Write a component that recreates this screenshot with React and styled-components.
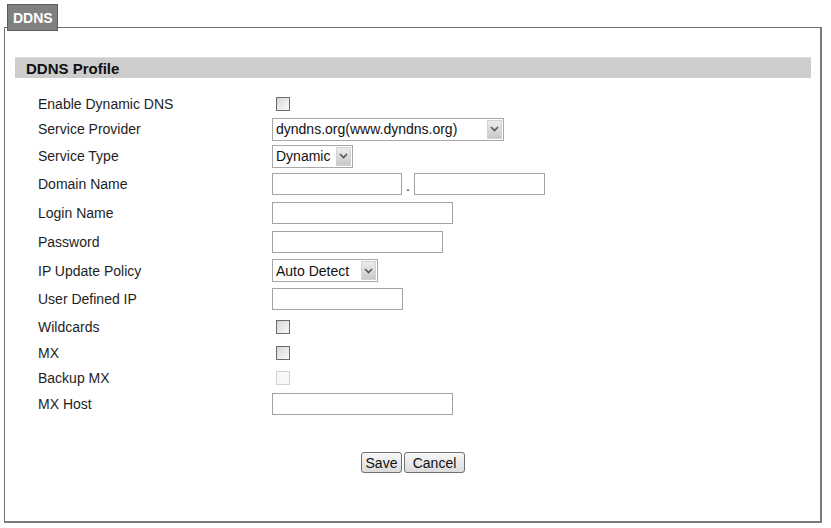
import React from 'react'
import styled, { createGlobalStyle } from 'styled-components'

// ------------------------------------------Styled---------------------------------------------

const GlobalStyle = createGlobalStyle`
    html, body {
        margin:0;
        padding:0;
        background:#fff;
    }
    body {
        font-family:"Liberation Sans", Arial, sans-serif;
        color:#1e1e1e;
    }
`
const Page = styled.div`
    width:818px;
    padding:4px 0 0 4px;
`
const Tab = styled.div`
    position:relative;
    z-index:1;
    box-sizing:border-box;
    width:51px;
    height:27px;
    margin-left:3px;
    margin-bottom:-4px;
    padding-left:5px;
    display:flex;
    align-items:center;
    background:#808080;
    border:1px solid #5c5c5c;
    color:#fff;
    font-weight:bold;
    font-size:14px;
`
const Panel = styled.div`
    box-sizing:border-box;
    height:496px;
    border:1px solid #707070;
    border-right:2px solid #7a7a7a;
    border-bottom:2px solid #7a7a7a;
    padding:29px 9px 0 10px;
`
const SectionHeader = styled.div`
    height:21px;
    line-height:21px;
    background:#cdcdcd;
    border-top:1px solid #dedede;
    box-sizing:border-box;
    padding-left:11px;
    font-weight:bold;
    font-size:15px;
    color:#111;
`
const Form = styled.div`
    margin-top:14px;
    padding-left:23px;
`
const Row = styled.div`
    display:grid;
    grid-template-columns:234px 1fr;
    align-items:center;
    height:${p => p.$h}px;
`
const Label = styled.div`
    font-size:14px;
    color:#1e1e1e;
`
const Field = styled.div`
    display:flex;
    align-items:center;
`
const TextInput = styled.input`
    box-sizing:border-box;
    width:${p => p.$w}px;
    height:22px;
    margin:0;
    border:1px solid #a3a3a3;
    background:#fff;
    font:14px "Liberation Sans", Arial, sans-serif;
    padding:0 3px;
    outline:none;
`
const Dot = styled.span`
    width:12px;
    text-align:center;
    font-size:14px;
    align-self:flex-end;
    line-height:18px;
`
const Check = styled.input`
    appearance:none;
    -webkit-appearance:none;
    box-sizing:border-box;
    width:14px;
    height:14px;
    margin:0 0 0 4px;
    border:1px solid ${p => (p.disabled ? '#d2d2d2' : '#6c6c6c')};
    background:${p => (p.disabled ? '#f7f7f7' : 'linear-gradient(135deg, #d6d6d6, #fafafa)')};
`
const SelectWrap = styled.div`
    position:relative;
    width:${p => p.$w}px;
    height:23px;
`
const Select = styled.select`
    appearance:none;
    -webkit-appearance:none;
    box-sizing:border-box;
    width:100%;
    height:100%;
    margin:0;
    border:1px solid #a8a8a8;
    border-radius:0;
    background:#fff;
    color:#111;
    font:14px "Liberation Sans", Arial, sans-serif;
    padding:0 0 0 3px;
    outline:none;
`
const ArrowBox = styled.span`
    position:absolute;
    top:2px;
    right:2px;
    bottom:2px;
    width:15px;
    box-sizing:border-box;
    border:1px solid #d2d2d2;
    background:linear-gradient(#ececec, #c9c9c9);
    display:flex;
    align-items:center;
    justify-content:center;
    pointer-events:none;
`
const ButtonBar = styled.div`
    margin-top:34px;
    display:flex;
    justify-content:center;
    gap:2px;
`
const Button = styled.button`
    box-sizing:border-box;
    width:${p => p.$w}px;
    height:21px;
    padding:0;
    border:1px solid #707070;
    border-radius:3px;
    background:linear-gradient(#f7f7f7, #dcdcdc);
    font:14px "Liberation Sans", Arial, sans-serif;
    color:#111;
`

// -------------------------------------------Structure---------------------------------------------

const Dropdown = ({ w, value, options }) => (
    <SelectWrap $w={w}>
        <Select defaultValue={value}>
            {options.map(o => <option key={o}>{o}</option>)}
        </Select>
        <ArrowBox>
            <svg width="9" height="6" viewBox="0 0 9 6">
                <path d="M1 1 L4.5 4.5 L8 1" fill="none" stroke="#555" strokeWidth="1.6" />
            </svg>
        </ArrowBox>
    </SelectWrap>
)

export default function App() {
    return (
        <Page>
            <GlobalStyle />
            <Tab>DDNS</Tab>
            <Panel>
                <SectionHeader>DDNS Profile</SectionHeader>
                <Form>
                    <Row $h={24}>
                        <Label>Enable Dynamic DNS</Label>
                        <Field><Check type="checkbox" /></Field>
                    </Row>
                    <Row $h={26}>
                        <Label>Service Provider</Label>
                        <Field>
                            <Dropdown w={232} value="dyndns.org(www.dyndns.org)"
                                options={['dyndns.org(www.dyndns.org)', 'no-ip.com(www.no-ip.com)']} />
                        </Field>
                    </Row>
                    <Row $h={28}>
                        <Label>Service Type</Label>
                        <Field>
                            <Dropdown w={81} value="Dynamic" options={['Dynamic', 'Static', 'Custom']} />
                        </Field>
                    </Row>
                    <Row $h={28}>
                        <Label>Domain Name</Label>
                        <Field>
                            <TextInput $w={130} />
                            <Dot>.</Dot>
                            <TextInput $w={131} />
                        </Field>
                    </Row>
                    <Row $h={30}>
                        <Label>Login Name</Label>
                        <Field><TextInput $w={181} /></Field>
                    </Row>
                    <Row $h={28}>
                        <Label>Password</Label>
                        <Field><TextInput $w={171} type="password" /></Field>
                    </Row>
                    <Row $h={29}>
                        <Label>IP Update Policy</Label>
                        <Field>
                            <Dropdown w={106} value="Auto Detect" options={['Auto Detect', 'User Defined']} />
                        </Field>
                    </Row>
                    <Row $h={28}>
                        <Label>User Defined IP</Label>
                        <Field><TextInput $w={131} /></Field>
                    </Row>
                    <Row $h={27}>
                        <Label>Wildcards</Label>
                        <Field><Check type="checkbox" /></Field>
                    </Row>
                    <Row $h={25}>
                        <Label>MX</Label>
                        <Field><Check type="checkbox" /></Field>
                    </Row>
                    <Row $h={25}>
                        <Label>Backup MX</Label>
                        <Field><Check type="checkbox" disabled /></Field>
                    </Row>
                    <Row $h={28}>
                        <Label>MX Host</Label>
                        <Field><TextInput $w={181} /></Field>
                    </Row>
                </Form>
                <ButtonBar>
                    <Button $w={41}>Save</Button>
                    <Button $w={61}>Cancel</Button>
                </ButtonBar>
            </Panel>
        </Page>
    )
}
